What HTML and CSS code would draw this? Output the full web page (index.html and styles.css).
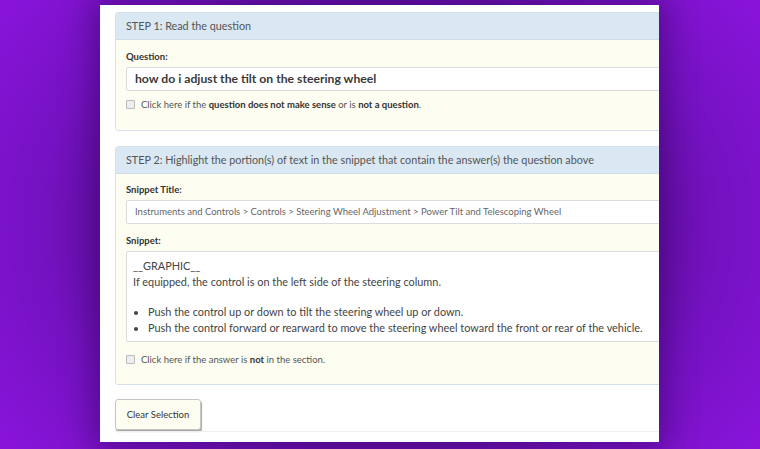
FILE: index.html
```html
<!DOCTYPE html>
<html>
<head>
<meta charset="utf-8">
<link rel="stylesheet" href="styles.css">
</head>
<body>
<div class="page">
  <div class="panel panel-one">
    <div class="panel-heading">STEP 1: Read the question</div>
    <div class="panel-body">
      <div class="label">Question:</div>
      <div class="field field-question">how do i adjust the tilt on the steering wheel</div>
      <div class="check"><span class="box"></span><span>Click here if the <b>question does not make sense</b> or is <b>not a question</b>.</span></div>
    </div>
  </div>
  <div class="panel panel-two">
    <div class="panel-heading">STEP 2: Highlight the portion(s) of text in the snippet that contain the answer(s) the question above</div>
    <div class="panel-body">
      <div class="label">Snippet Title:</div>
      <div class="field field-title">Instruments and Controls &gt; Controls &gt; Steering Wheel Adjustment &gt; Power Tilt and Telescoping Wheel</div>
      <div class="label label-snippet">Snippet:</div>
      <div class="snippet">
        <div>__GRAPHIC__</div>
        <div>If equipped, the control is on the left side of the steering column.</div>
        <ul>
          <li>Push the control up or down to tilt the steering wheel up or down.</li>
          <li>Push the control forward or rearward to move the steering wheel toward the front or rear of the vehicle.</li>
        </ul>
      </div>
      <div class="check check-answer"><span class="box"></span><span>Click here if the answer is <b>not</b> in the section.</span></div>
    </div>
  </div>
  <button class="btn">Clear Selection</button>
  <div class="rule"></div>
</div>
</body>
</html>
```
FILE: styles.css
```css
html, body {
  margin: 0;
  height: 100%;
}
body {
  background: radial-gradient(ellipse 60% 80% at 50% 50%, #4a0a7e 0%, #560c90 45%, #7512c2 75%, #8714d8 100%);
  overflow: hidden;
  font-family: Lato, "Liberation Sans", sans-serif;
  color: #444;
}
.page {
  margin: 5px 0 0 100px;
  width: 544px;
  height: 430px;
  padding: 7px 0 0 15px;
  background: #fff;
  overflow: hidden;
  box-shadow: 0 0 30px 8px rgba(45, 0, 80, 0.45);
}
.panel {
  width: 620px;
  border: 1px solid #d5e0e8;
  border-radius: 3px;
  overflow: hidden;
}
.panel-two {
  margin-top: 15px;
}
.panel-heading {
  background: #d9e8f3;
  border-bottom: 1px solid #cfdde8;
  height: 26px;
  line-height: 26px;
  padding-left: 10px;
  font-size: 10.8px;
  color: #555;
}
.panel-body {
  background: #fdfdf1;
  padding: 10px 10px 0 10px;
}
.panel-one .panel-body {
  height: 80px;
}
.panel-two .panel-body {
  padding-top: 9px;
  height: 201px;
}
.label {
  font-size: 9.5px;
  font-weight: bold;
  color: #333;
  height: 14px;
  line-height: 14px;
  margin-bottom: 3px;
}
.label-snippet {
  margin-top: 10px;
}
.field {
  background: #fff;
  border: 1px solid #dcdcdc;
  border-radius: 2px;
  height: 22px;
  line-height: 22px;
  padding-left: 8px;
}
.field-question {
  font-size: 12.2px;
  font-weight: bold;
  color: #3a3a3a;
}
.field-title {
  font-size: 9.5px;
  color: #666;
}
.check {
  display: flex;
  align-items: center;
  gap: 6px;
  margin-top: 6px;
  font-size: 9.5px;
  color: #555;
  height: 14px;
}
.check-answer {
  margin-top: 10px;
}
.check b {
  color: #333;
}
.box {
  width: 7px;
  height: 7px;
  border: 1px solid #bbb;
  background: #eee;
  border-radius: 1px;
}
.snippet {
  box-sizing: border-box;
  background: #fff;
  border: 1px solid #dcdcdc;
  border-radius: 2px;
  padding: 6px 6px 0 6px;
  font-size: 10.9px;
  line-height: 15.5px;
  color: #444;
  height: 91px;
}
.snippet ul {
  margin: 15px 0 0 0;
  padding-left: 15px;
}
.btn {
  display: block;
  margin-top: 14px;
  width: 86px;
  height: 31px;
  background: #fdfdf2;
  border: 1px solid #c6c6c0;
  border-radius: 3px;
  box-shadow: 1px 2px 1px rgba(0, 0, 0, 0.35);
  font-family: Lato, "Liberation Sans", sans-serif;
  font-size: 9.5px;
  color: #333;
  padding: 0;
}
.rule {
  margin-top: 1px;
  height: 1px;
  background: #f0f0f0;
}
```
